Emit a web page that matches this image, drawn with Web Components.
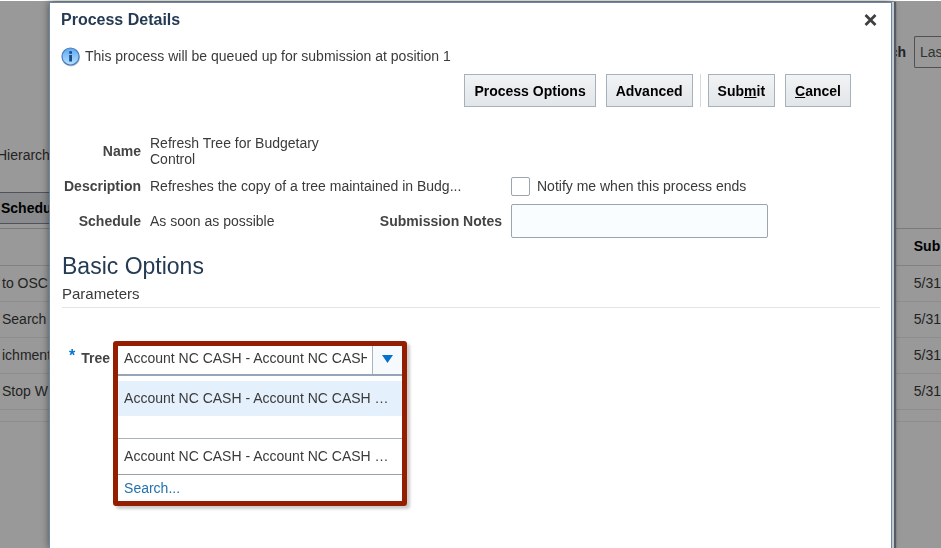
<!DOCTYPE html>
<html lang="en">
<head>
<meta charset="utf-8">
<title>Process Details</title>
<style>
  html, body { height: 100%; }
  body {
    margin: 0;
    overflow: hidden;
    background: #fff;
    color: #3a3a3a;
    font: 14px/18px "Liberation Sans", Arial, sans-serif;
  }
</style>
</head>
<body>
<process-page></process-page>
<modal-dialog heading="Process Details">
  <info-message>This process will be queued up for submission at position 1</info-message>
  <action-bar></action-bar>
  <process-summary></process-summary>
  <basic-options></basic-options>
</modal-dialog>

<script>
(() => {
  const define = (name, html) => {
    if (window.customElements.get(name)) {
      console.warn(`${name} already defined`);
      return;
    }

    window.customElements.define(name, class extends HTMLElement {
      constructor() {
        super();
        this.attachShadow({ mode: 'open' });
      }

      connectedCallback() {
        this.shadowRoot.innerHTML = `
          <style>*, *::before, *::after { box-sizing: border-box; }</style>
          ${typeof html === 'function' ? html(this) : html}
        `;
      }
    });
  };

  const ROWS = ['to OSC', 'Search', 'ichment', 'Stop W'];

  // the processes list that lies under the backdrop
  define('process-page', `
    <style>
      :host { display: block; overflow: hidden; }
      header {
        display: flex;
        justify-content: flex-end;
        align-items: center;
        gap: 8px;
        height: 68px;
        padding-top: 36px;
        font-weight: bold;
      }
      select {
        appearance: none;
        width: 27px;
        height: 32px;
        padding: 0 0 0 5px;
        border: 1px solid #888;
        border-right: 0;
        border-radius: 2px 0 0 2px;
        background: #fff;
        color: #555;
        font: inherit;
        font-weight: normal;
      }
      p { margin: 78px 0 28px -3px; }
      .toolbar {
        display: flex;
        width: 50%;
        height: 32px;
        border: solid #889;
        border-width: 1px 0;
        background: #e4e8ea;
      }
      .toolbar button {
        padding: 0 0 0 1px;
        border: 0;
        background: none;
        color: #000;
        font: inherit;
        font-weight: bold;
      }
      table {
        width: 100%;
        margin-top: 4px;
        border-collapse: collapse;
        border: solid #ccc;
        border-width: 1px 0;
      }
      th, td {
        height: 36px;
        padding: 0 0 2px 2px;
        border-bottom: 1px solid #ebebeb;
        text-align: left;
        white-space: nowrap;
      }
      th { height: 37px; border-bottom-color: #d8d8d8; color: #000; }
      th + th, td + td { width: 27px; padding-left: 0; }
      tfoot td { height: 12px; }
    </style>
    <header>
      <label for="range">ch</label>
      <select id="range"><option>Las</option></select>
    </header>
    <p>Hierarch</p>
    <div class="toolbar"><button type="button">Schedu</button></div>
    <table>
      <thead><tr><th></th><th>Sub</th></tr></thead>
      <tbody>${ROWS.map(row => `<tr><td>${row}</td><td>5/31</td></tr>`).join('')}</tbody>
      <tfoot><tr><td colspan="2"></td></tr></tfoot>
    </table>
  `);

  define('modal-dialog', el => `
    <style>
      :host {
        position: fixed;
        inset: 1px 0 0;
        display: flex;
        padding: 1px 49px 0 49px;
        background: rgba(0, 0, 0, 0.4);
      }
      section {
        flex: 1;
        min-width: 0;
        padding: 0 10px 0 11px;
        border: solid #6b87a3;
        border-width: 1px 1px 0;
        background: #fff;
        box-shadow: 2px 0 0 #c3c9cd, 4px 0 1px #555b66, 0 0 8px rgba(0, 0, 0, 0.5);
      }
      header {
        display: flex;
        align-items: center;
        justify-content: space-between;
        height: 34px;
      }
      h1 { margin: 0; color: #253b53; font-size: 16px; }
      header button { display: flex; padding: 4px; border: 0; background: none; }
    </style>
    <section role="dialog" aria-labelledby="title">
      <header>
        <h1 id="title">${el.getAttribute('heading')}</h1>
        <button type="button" aria-label="Close">
          <svg width="13" height="12" viewBox="0 0 13 12"><path d="M1.500 1l10 10M11.500 1l-10 10" stroke="#404040" stroke-width="2.800"/></svg>
        </button>
      </header>
      <slot></slot>
    </section>
  `);

  define('info-message', `
    <style>
      :host { display: flex; align-items: center; gap: 4px; height: 32px; padding-top: 4px; }
      span { padding-bottom: 2px; }
    </style>
    <svg width="20" height="20" viewBox="0 0 20 20">
      <defs><linearGradient id="g" x2="0" y2="1"><stop stop-color="#5fa8ee"/><stop offset="1" stop-color="#b4e2ff"/></linearGradient></defs>
      <circle cx="10" cy="10.500" r="9" fill="#b9c0cc"/>
      <circle cx="9.500" cy="9.500" r="8.500" fill="url(#g)" stroke="#4a7cc0" stroke-width="1.200"/>
      <path d="M8.200 8h2.800v6.500H8.200zM8.200 4.200h2.800v2.500H8.200z" fill="#174a8c"/>
    </svg>
    <span><slot></slot></span>
  `);

  define('action-bar', `
    <style>
      :host {
        display: flex;
        justify-content: flex-end;
        gap: 10px;
        padding: 1px 30px 0 0;
      }
      button {
        height: 33px;
        padding: 0 9px;
        border: 1px solid #a5b1bd;
        background: linear-gradient(#f1f3f4, #e2e6e9);
        color: #000;
        font: inherit;
        font-weight: bold;
      }
      i { width: 1px; margin: 0 -3px; background: #d5dade; }
    </style>
    <button type="button">Process Options</button>
    <button type="button">Advanced</button>
    <i></i>
    <button type="button">Sub<u>m</u>it</button>
    <button type="button"><u>C</u>ancel</button>
  `);

  define('process-summary', `
    <style>
      :host {
        display: grid;
        grid-template-columns: 80px 352px 257px;
        column-gap: 9px;
        align-items: center;
        padding-top: 28px;
      }
      b, .notes { color: #444; font-weight: bold; text-align: right; }
      .name { width: 190px; line-height: 16px; }
      .name, .name-label { margin-bottom: 7px; }
      .check { display: flex; align-items: center; gap: 7px; height: 24px; }
      input { margin: 0; border: 1px solid #9aa5ad; border-radius: 2px; }
      input[type=checkbox] { appearance: none; width: 19px; height: 19px; }
      input[type=text] { width: 100%; height: 34px; padding: 0 6px; background: #fafdff; font: inherit; }
      .schedule { display: flex; justify-content: space-between; }
      .row { margin-top: 6px; }
    </style>
    <b class="name-label">Name</b><span class="name">Refresh Tree for Budgetary Control</span><span></span>
    <b>Description</b><span>Refreshes the copy of a tree maintained in Budg...</span>
    <div class="check"><input type="checkbox" id="notify"><label for="notify">Notify me when this process ends</label></div>
    <b class="row">Schedule</b>
    <div class="schedule row"><span>As soon as possible</span><label class="notes" for="notes">Submission Notes</label></div>
    <input class="row" type="text" id="notes">
  `);

  define('basic-options', `
    <style>
      :host { display: block; padding: 14px 1px 0; }
      h2 { margin: 0; color: #253b53; font-size: 23px; line-height: 28px; font-weight: normal; }
      h3 {
        margin: 0 0 33px;
        padding: 5px 0 4px;
        border-bottom: 1px solid #dfe4e9;
        font-size: 15px;
        font-weight: normal;
      }
      .field { display: flex; gap: 3px; padding-left: 7px; }
      label { display: flex; gap: 6px; margin-top: 8px; font-weight: bold; color: #444; }
      label span { color: #0572ce; font-size: 16px; line-height: 14px; }
    </style>
    <h2>Basic Options</h2>
    <h3>Parameters</h3>
    <div class="field">
      <label><span>*</span>Tree</label>
      <tree-picker></tree-picker>
    </div>
  `);

  define('tree-picker', `
    <style>
      :host {
        width: 294px;
        border: 5px solid #931f00;
        border-radius: 3px;
        background: #fff;
        box-shadow: 3px 3px 3px rgba(0, 0, 0, 0.2);
      }
      .box { display: flex; height: 30px; border-bottom: 2px solid #93a5b7; }
      input {
        flex: 1;
        min-width: 0;
        padding: 0 5px 4px 6px;
        border: 0;
        background: none;
        color: inherit;
        font: inherit;
      }
      .box button {
        display: grid;
        place-items: center;
        width: 30px;
        padding: 0 0 2px;
        border: 0;
        border-left: 1px solid #a9b6c2;
        background: #f7fafc;
      }
      ul { margin: 0; padding: 5px 0 0; list-style: none; }
      li {
        height: 35px;
        padding: 0 6px;
        overflow: hidden;
        line-height: 34px;
        text-overflow: ellipsis;
        white-space: nowrap;
      }
      li[aria-selected=true] { margin-bottom: 22px; background: #e4f0fc; }
      li + li { height: 36px; border-top: 1px solid #a9b3bb; }
      a {
        display: block;
        height: 27px;
        padding-left: 6px;
        border-top: 1px solid #98a2aa;
        color: #2272ad;
        line-height: 27px;
        text-decoration: none;
      }
    </style>
    <div class="box">
      <input type="text" aria-label="Tree" value="Account NC CASH - Account NC CASH">
      <button type="button" aria-label="Show list"><svg width="11" height="8"><path d="M0 0h11L5.500 8z" fill="#0572ce"/></svg></button>
    </div>
    <ul role="listbox">
      <li role="option" aria-selected="true">Account NC CASH - Account NC CASH …</li>
      <li role="option">Account NC CASH - Account NC CASH …</li>
    </ul>
    <a href="#search">Search...</a>
  `);
})();
</script>
</body>
</html>
